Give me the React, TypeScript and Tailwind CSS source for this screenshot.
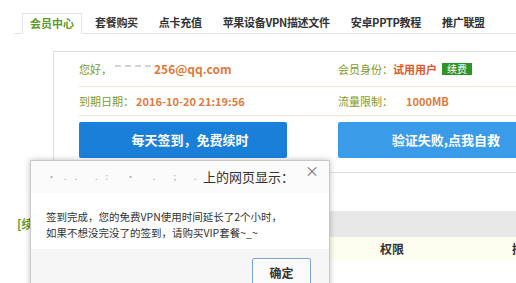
import React from 'react';

const tabs = ['会员中心', '套餐购买', '点卡充值', '苹果设备VPN描述文件', '安卓PPTP教程', '推广联盟'];

export default function App() {
  return (
    <div className="relative w-[516px] h-[283px] overflow-hidden bg-white text-[#333] whitespace-nowrap" style={{ fontFamily: '"Noto Sans CJK SC", "Liberation Sans", sans-serif' }}>
      {/* tabs */}
      <div className="pt-[13px] pl-[14px]">
        <div className="flex items-end gap-[5px] border-b border-[#e3e3e3] h-[21px] pl-[8px]">
          {tabs.map((t, i) => (
            <div
              key={t}
              className={
                i === 0
                  ? 'shrink-0 h-[21px] px-[7px] -mb-px flex items-center border border-[#e3e3e3] border-b-white bg-white text-[11px] font-bold text-[#5c9a2e]'
                  : 'shrink-0 h-[21px] px-[8px] flex items-center text-[11px] font-bold tracking-[-0.3px] text-[#333]'
              }
            >
              {t}
            </div>
          ))}
        </div>
      </div>

      {/* member card */}
      <div className="ml-[53px] mt-[17px] border-l border-t border-b border-[#dedede] h-[122px] pl-[25px]">
        <div className="flex h-[35px] border-b border-[#f3ead9] items-center text-[11px]">
          <div className="w-[259px] shrink-0 flex items-center">
            <span className="text-[#7d9a2f]">您好，</span>
            <span className="w-[36px] mx-[3px] -mt-[6px] border-t-2 border-dashed border-[#d4d4d4]" />
            <span className="font-bold text-[12px] text-[#e07a3a]">256@qq.com</span>
          </div>
          <div className="flex items-center">
            <span className="text-[#7d9a2f]">会员身份：</span>
            <span className="font-bold text-[#e0582a]">试用用户</span>
            <span className="ml-[5px] px-[5px] h-[12px] leading-[12px] text-[10px] bg-[#2f9428] text-white">续费</span>
          </div>
        </div>
        <div className="flex h-[29px] border-b border-[#f3ead9] items-center text-[11px]">
          <div className="w-[259px] shrink-0 flex items-center">
            <span className="text-[#7d9a2f]">到期日期：</span>
            <span className="font-bold text-[#e07a3a] ml-[2px]">2016-10-20 21:19:56</span>
          </div>
          <div className="flex items-center">
            <span className="text-[#7d9a2f]">流量限制：</span>
            <span className="font-bold text-[#e07a3a] ml-[13px]">1000MB</span>
          </div>
        </div>
        <div className="flex mt-[6px]">
          <div className="w-[208px] shrink-0 h-[36px] mr-[51px] pl-[14px] bg-[#1a7fd8] rounded-[2px] flex items-center justify-center text-white text-[13px] font-bold">
            每天签到，免费续时
          </div>
          <div className="flex-1 h-[36px] bg-[#3a9be9] rounded-l-[2px] flex items-center justify-end pr-[16px] text-white text-[13px] font-bold">
            验证失败,点我自救
          </div>
        </div>
      </div>

      {/* lower section */}
      <div className="flex mt-[38px] pl-[17px]">
        <div className="w-[68px] shrink-0 pt-[4px] text-[12px] font-bold text-[#5c9a2e]">[续费记录]</div>
        <div className="flex-1">
          <div className="h-[26px] bg-[#e8e8e8]" />
          <div className="h-[23px] bg-[#fdfdf0] flex items-center text-[12px] font-bold">
            <span className="ml-[295px] shrink-0">权限</span>
            <span className="ml-[108px] shrink-0">操作</span>
          </div>
        </div>
      </div>

      {/* alert dialog */}
      <div className="absolute left-[30px] top-[160px] w-[300px] h-[140px] border border-[#c9c9c9] bg-white shadow-[0_0_6px_rgba(0,0,0,0.25)]">
        <div className="h-[32px] flex items-center pl-[16px] pr-[10px] bg-[#fbfbfb]">
          <span className="text-[#aaa] text-[9px] tracking-[8px] w-[156px] shrink-0">·.. .: · . ; .</span>
          <span className="text-[13px] text-[#333]">上的网页显示：</span>
          <span className="ml-auto -mt-[14px] text-[14px] leading-none text-[#777]">×</span>
        </div>
        <div className="h-[56px] pl-[15px] pt-[16px] text-[10.5px] leading-[16px] text-[#333]">
          <div>签到完成，您的免费VPN使用时间延长了2个小时，</div>
          <div>如果不想没完没了的签到，请购买VIP套餐~_~</div>
        </div>
        <div className="h-[52px] bg-[#f5f5f5] flex justify-end pr-[18px] pt-[9px]">
          <div className="w-[59px] h-[30px] border border-[#7aa7d8] bg-[#fafafa] rounded-[2px] flex items-center justify-center text-[12px] font-bold text-[#333]">
            确定
          </div>
        </div>
      </div>
    </div>
  );
}
